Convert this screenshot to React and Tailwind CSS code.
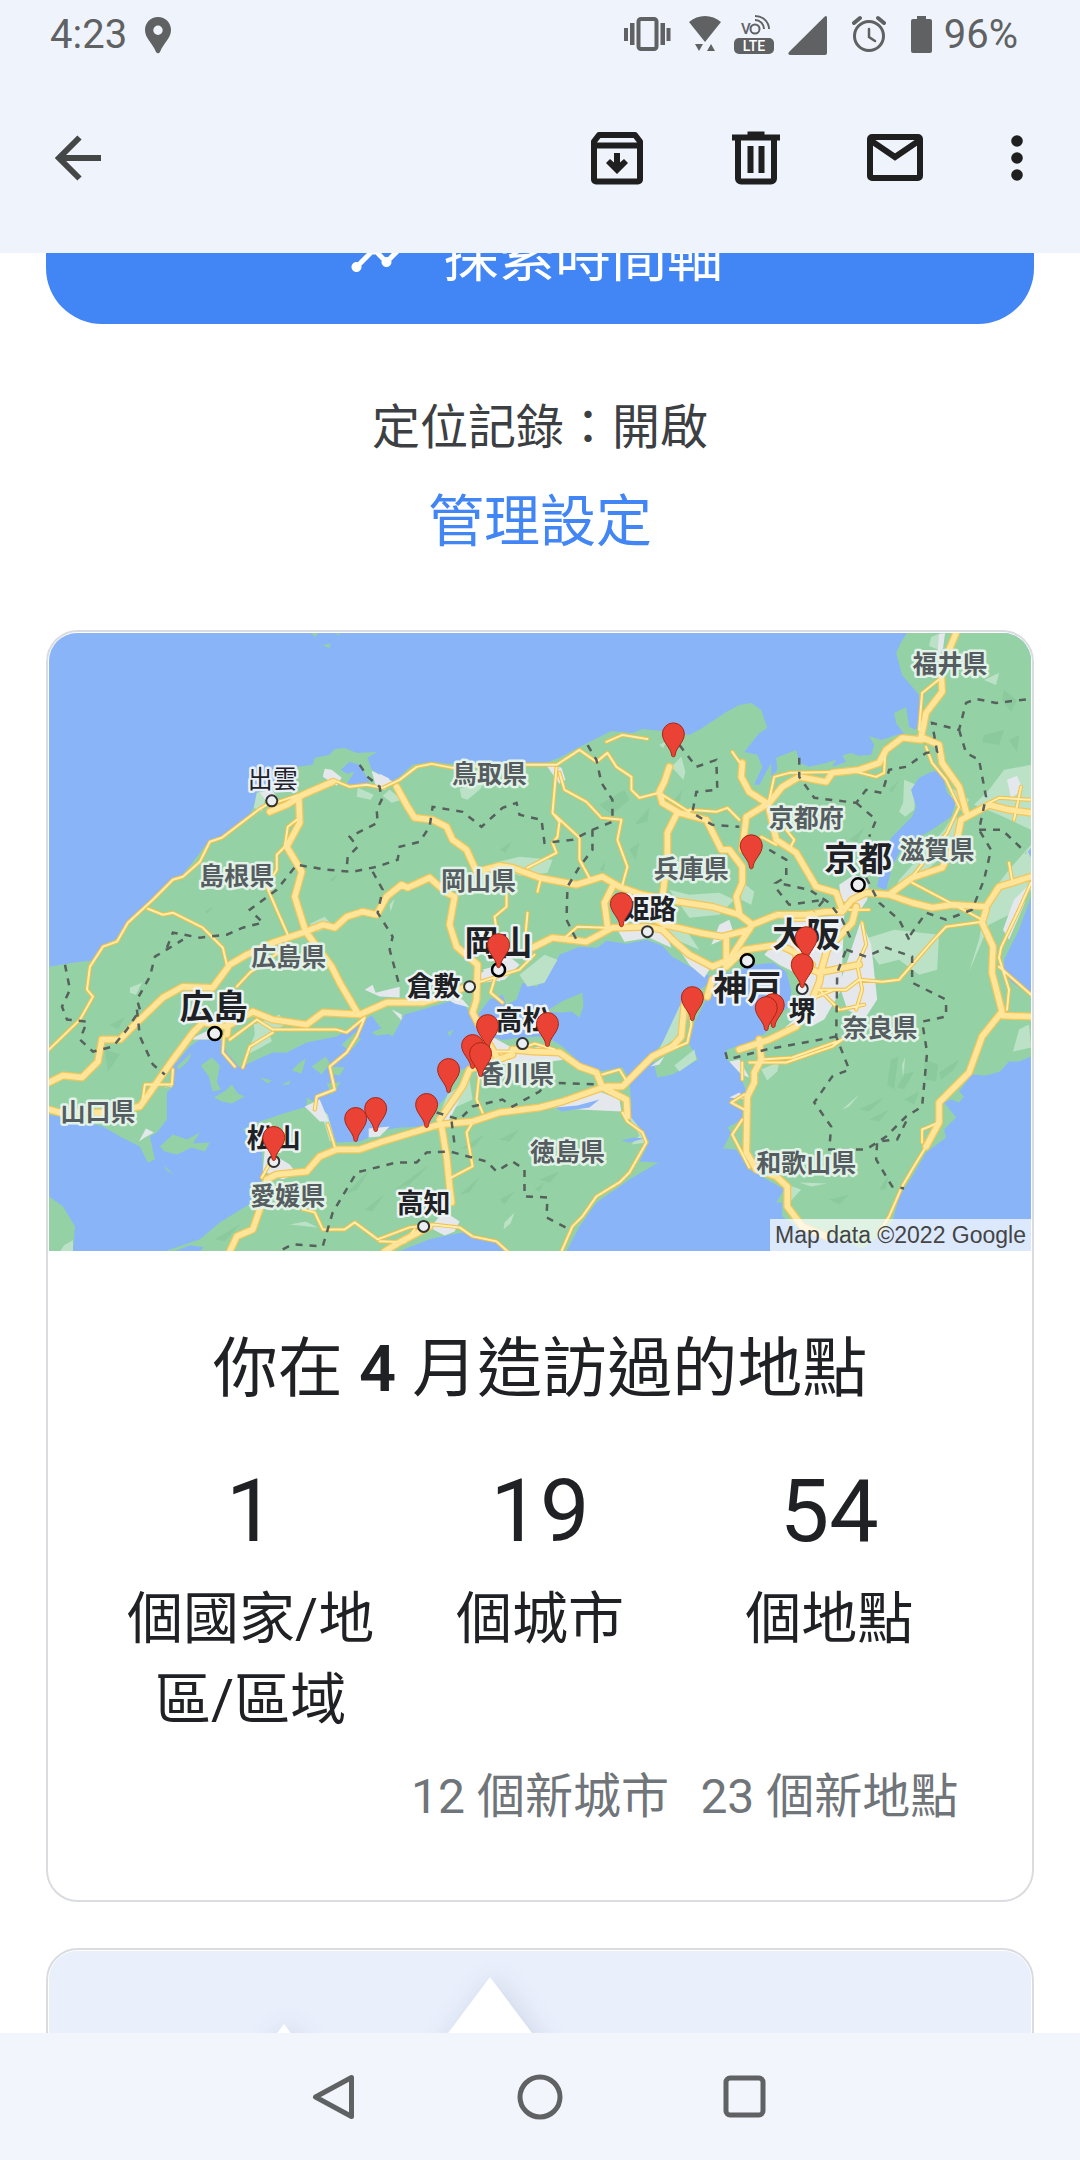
import React from 'react';
import { MdTimeline } from 'react-icons/md';

// Map shapes, all in the map's own coordinate space (see viewBox below)
const land = [
  // Honshu
  'M49 967 73 963 98 960 101 947 120 937 128 922 148 907 163 887 183 875 200 853 210 840 222 837 250 815 254 807 257 793 270 787 280 772 298 767 313 765 315 758 330 755 335 749 345 748 357 753 377 752 368 758 372 770 392 782 400 777 413 765 432 762 447 764 503 763 547 763 562 757 580 747 612 731 633 733 643 729 663 731 690 735 703 728 727 712 740 705 752 703 762 710 768 728 760 733 745 752 758 755 763 767 755 785 760 785 772 763 772 777 778 770 777 758 797 750 800 763 810 767 828 763 837 760 833 767 847 762 843 756 851 753 860 756 872 755 875 745 870 736 882 740 897 735 905 734 897 723 895 713 907 707 910 727 917 730 922 713 920 695 903 675 897 653 902 642 908 633 1032 633 1032 897 1020 930 1005 960 1005 973 1013 983 1032 995 1032 1057 1020 1062 1010 1062 1001 1072 987 1076 973 1075 960 1092 965 1097 960 1103 952 1100 945 1103 957 1118 945 1130 947 1138 927 1153 913 1177 900 1197 893 1223 880 1237 863 1250 843 1240 800 1229 783 1217 783 1203 777 1203 785 1190 773 1183 750 1170 737 1150 724 1149 732 1133 728 1128 743 1120 743 1110 730 1104 747 1092 740 1073 725 1057 728 1050 750 1043 767 1033 772 1020 790 1007 792 990 787 972 774 963 755 965 735 972 713 977 700 972 673 957 663 946 647 940 627 944 607 941 598 948 580 947 560 955 548 977 537 987 523 983 517 1000 507 1005 503 995 490 1000 477 1017 470 1013 463 1003 450 1002 423 1010 405 1015 393 1037 380 1027 372 1016 360 1023 337 1037 307 1043 287 1053 273 1053 257 1060 240 1068 227 1053 222 1040 200 1040 190 1047 173 1067 173 1087 167 1093 167 1120 157 1133 150 1137 155 1160 148 1163 140 1147 120 1137 103 1127 83 1122 49 1115Z',
  // Shikoku
  'M165 1252 200 1240 220 1223 257 1200 263 1173 262 1150 243 1130 257 1123 287 1113 307 1107 307 1098 323 1107 330 1127 337 1143 360 1142 388 1130 400 1128 430 1127 433 1113 450 1093 455 1073 470 1067 484 1048 494 1038 503 1040 523 1038 540 1037 550 1039 563 1047 580 1063 600 1072 623 1068 630 1080 632 1107 627 1117 643 1133 650 1142 640 1162 659 1163 630 1180 597 1203 580 1227 567 1252 507 1252 497 1244 463 1233 447 1236 430 1240 400 1252Z',
  // Awaji
  'M682 1007 690 997 708 985 707 1000 695 1023 690 1045 699 1060 673 1075 658 1078 653 1057 670 1033Z',
  // Kyushu
  'M49 1197 63 1207 75 1227 73 1252 49 1252Z',
  // islands
  'M547 1012 562 1002 583 993 584 1007 580 1018 572 1012 562 1013Z',
  'M160 1147 173 1135 187 1140 200 1133 193 1144 210 1143 205 1152 192 1148 177 1155 165 1152Z',
  'M201 1066 212 1058 220 1066 217 1083 221 1090 213 1092 209 1077Z',
  'M214 1098 226 1091 232 1085 238 1094 245 1097 232 1104 222 1102Z',
  'M177 1067 192 1053 188 1062 179 1070Z',
  'M292 1071 300 1063 306 1059 302 1074Z',
  'M260 1078 272 1081 268 1084Z M282 1085 291 1081 289 1085Z',
  'M312 1067 326 1057 330 1064 322 1075Z',
  'M328 1067 345 1068 340 1076 330 1074Z M327 1084 341 1083 332 1095Z',
  'M342 1045 355 1033 361 1040 350 1052Z M372 1033 398 1022 394 1034 377 1036Z',
  'M503 994 511 987 520 984 516 998Z',
  'M311 633 318 633 316 637Z M322 645 331 644 330 648Z M338 633 341 635 336 635Z',
  'M163 1230 160 1234Z M164 1166 174 1175 167 1171Z',
  'M448 1033 454 1030 450 1037Z',
];

const water = [
  'M930 773 942 770 948 793 957 802 952 817 933 830 903 847 893 867 887 890 878 887 882 867 892 838 913 817 917 807 912 790 920 778Z',
  'M341 770 350 762 360 765 370 783 358 786 347 784 355 772 347 774Z',
  'M498 1037 515 1035 510 1040 500 1040Z M556 1108 578 1106 600 1100 590 1108 562 1112Z',
  'M622 1141 634 1138 645 1139 630 1143Z',
  'M174 1252 190 1246 204 1248 200 1252Z M400 1252 412 1247 408 1252Z',
  'M1029 852 1032 848 1032 858Z',
];

// lowlands, lighter than the forest
const lowland = [
  'M905 780 917 785 915 810 906 817 900 812 904 803Z M932 637 942 633 940 650 930 646Z',
  'M460 789 468 786 487 780 480 790 468 800 462 798Z',
  'M383 796 390 790 402 800 392 803Z M357 797 358 788 374 795 371 800Z M254 808 257 793 268 790 262 812Z',
  'M495 863 520 857 553 860 548 873 520 876Z',
  'M672 767 682 757 686 772 684 780Z',
  'M130 988 142 983 136 995 130 993Z M310 924 325 917 332 925 318 932Z',
  'M254 1025 280 1015 285 1025 270 1035 272 1042 246 1056 255 1035Z',
  'M520 975 545 955 558 960 545 983 528 987Z',
  'M670 890 690 895 720 893 735 900 720 915 690 918Z M640 905 660 910 690 935 700 950 665 935Z',
  'M740 880 755 892 752 905 742 900Z M948 785 970 800 964 812 955 805Z',
  'M945 830 957 812 960 835 940 860 915 880 896 890 900 880Z',
  'M990 790 1005 770 1032 765 1032 830 1000 815 975 805Z',
  'M1032 845 1032 890 1010 915 990 925 970 972 980 940 987 900 1010 870Z',
  'M680 1007 690 1000 688 1020 675 1040 660 1050Z M675 1066 695 1050 697 1060 680 1072Z',
  'M863 940 895 930 940 935 938 970 920 975 900 960 880 965Z',
  'M780 1062 762 1070 768 1081 778 1072Z M790 1186 802 1190 790 1203Z',
  'M320 1108 328 1115 335 1140 330 1142Z M448 1095 470 1080 473 1100 440 1115Z',
  'M625 1110 640 1128 648 1143 632 1145 640 1136Z M64 1246 73 1241 73 1252 60 1252Z',
  'M660 745 667 741 664 748Z M390 905 395 899 391 912Z M1020 1030 1030 1025 1032 1048 1014 1052Z',
  'M505 1223 515 1213 511 1224 504 1230Z M843 1110 860 1095 850 1107Z M800 1183 812 1187 828 1184Z',
  'M985 680 1000 673 997 685Z M903 1065 906 1058 904 1078Z M290 1225 306 1222 318 1228Z',
];

const urban = [
  'M260 793 272 790 278 798 268 803Z M325 769 332 770 342 778 337 786 323 777Z M372 771 394 782 385 790 376 786Z',
  'M380 774 390 779 383 785Z M545 763 562 768 566 780 560 784Z M940 634 946 633 944 648 938 660Z',
  'M365 990 373 985 376 993 400 987 400 998 380 997Z M392 1010 402 1015 402 1021Z',
  'M445 998 463 1000 470 1008 455 1004Z M478 975 510 957 520 965 505 980 483 983Z M483 970 500 965 510 970 500 982Z',
  'M618 930 665 930 672 948 650 938 625 942Z M680 950 710 970 705 978 690 965Z',
  'M840 885 855 875 870 880 868 900 860 912 850 905 842 900Z M862 920 872 945 877 990 878 1000 865 1020 848 1010 840 985 852 950Z',
  'M795 920 845 915 842 990 825 1020 812 1027 800 1020 800 975 780 965 765 955Z',
  'M720 925 730 920 735 935 712 945Z M760 1050 795 1020 810 1008 800 1022 775 1035Z M730 1062 740 1060 750 1078 742 1075Z',
  'M139 1142 146 1129 154 1133 145 1138Z M164 1089 173 1083 172 1088 168 1087Z M190 1040 210 1030 222 1040 200 1040Z',
  'M305 1107 320 1100 329 1122 320 1122Z M263 1172 265 1150 290 1165 297 1174 283 1180 272 1175Z',
  'M369 1129 390 1127 380 1137 369 1138Z M492 1037 520 1052 548 1045 565 1060 545 1063 505 1065 488 1058Z',
  'M555 1108 600 1092 620 1100 622 1112 580 1110Z M440 1125 460 1100 455 1110 446 1127Z M430 1228 445 1212 460 1222 455 1232 445 1236Z',
  'M1008 780 1018 776 1024 790 1012 798Z M1015 900 1030 885 1025 905 1010 940 1004 930Z',
  'M730 1098 740 1093 746 1100Z M651 1067 665 1057 660 1065Z M378 1130 387 1129 383 1133Z',
];

// hill shading
const hills =
  'M600 805 625 790 630 800 612 815Z M635 825 650 808 648 822Z M675 800 683 790 680 802Z M985 735 1005 730 1000 745 983 742Z M1005 690 1018 700 1012 712 1003 700Z M1010 740 1020 735 1018 752Z M892 1060 899 1057 895 1090 888 1085Z M905 1075 915 1072 905 1090 898 1088Z M925 1060 939 1065 937 1082 926 1080Z M940 1073 960 1060 955 1070 942 1080Z M860 1110 885 1098 870 1112Z M905 1100 920 1092 915 1105Z M870 1120 890 1110 880 1122Z M460 1195 480 1178 470 1193Z M500 1200 515 1192 505 1205Z M500 1140 520 1130 510 1142Z M535 1190 545 1183 540 1192Z M345 1195 370 1170 358 1190Z M365 1210 385 1195 372 1212Z M395 1190 430 1165 410 1185Z M215 1240 240 1225 225 1242Z M540 1180 560 1172 550 1183Z M460 1150 485 1135 475 1147Z M105 1050 120 1055 108 1072Z M110 1025 125 1018 118 1030Z M330 880 338 875 333 882Z M205 912 214 906 208 914Z M500 850 512 842 506 853Z M630 850 640 843 636 860Z M600 870 606 862 604 872Z M850 840 865 828 858 842Z M890 790 900 780 893 793Z M880 1190 890 1175 886 1190Z M830 1200 850 1195 840 1205Z';

const highways =
  'M270 812 287 805 303 795 333 782 M299 797 300 823 287 847 302 872 295 897 306 932 332 967 340 983 357 1012 M430 878 408 888 402 885 387 897 377 915 363 912 347 917 335 928 323 925 303 933 273 943 247 955 230 965 213 988 183 987 163 998 137 1023 120 1040 102 1040 98 1062 82 1078 63 1076 49 1083 M430 878 447 893 455 897 450 925 457 947 478 965 477 1000 473 1013 487 1040 497 1057 M49 1110 60 1113 107 1113 140 1107 150 1093 173 1060 193 1033 203 1023 227 1027 253 1012 273 1020 307 1025 323 1013 360 1015 387 1003 423 1003 440 998 477 983 M227 1035 230 1015 M397 787 408 807 415 818 433 820 447 827 453 840 467 850 477 872 500 866 513 868 540 878 577 885 603 877 620 887 643 895 680 902 713 907 740 915 753 925 778 915 807 915 827 912 843 912 853 900 867 893 890 895 913 878 943 868 958 840 962 820 990 805 1010 810 1032 813 M670 767 665 782 660 792 663 803 680 813 707 820 722 850 730 850 743 867 743 883 737 897 740 913 M678 813 668 833 668 860 663 897 M533 948 553 938 587 942 613 928 647 927 663 930 673 940 690 955 713 967 730 960 753 925 M613 887 605 903 608 926 M647 915 665 925 700 933 723 937 750 930 M727 967 727 940 M957 633 950 650 942 670 943 692 927 713 922 737 940 745 943 763 960 787 967 812 M922 740 903 738 887 750 880 763 860 770 833 773 827 782 800 777 783 787 770 803 747 817 743 850 M743 763 742 777 750 792 767 803 M770 810 777 840 797 853 817 887 837 893 843 910 M890 895 913 903 933 908 953 905 987 907 1000 887 1032 877 M987 910 983 923 994 947 993 973 1003 1012 983 1037 970 1073 940 1103 940 1123 927 1147 M1003 1016 1032 1017 M857 907 853 923 840 937 828 950 823 967 820 983 810 1007 797 1027 770 1040 740 1050 M760 1040 762 1060 755 1073 755 1083 748 1097 747 1153 757 1170 777 1177 788 1187 788 1207 803 1227 827 1237 M797 955 797 963 820 973 860 965 M727 967 745 950 780 945 800 955 M713 980 708 997 M685 1005 682 1037 673 1047 653 1057 637 1073 623 1087 607 1087 M513 1050 533 1052 560 1053 580 1067 597 1073 603 1088 563 1102 540 1108 500 1113 473 1122 440 1125 380 1143 360 1150 337 1150 320 1157 307 1172 277 1175 267 1180 260 1210 253 1230 237 1237 230 1252 M440 1120 463 1087 470 1070 513 1055 M442 1127 447 1157 450 1187 452 1203 M430 1227 400 1243 385 1252 M603 1088 627 1100 628 1117';

const roads =
  'M270 803 260 809 222 838 210 842 200 862 183 877 173 880 153 900 128 923 117 942 103 947 90 967 87 990 93 997 80 1020 49 1050 M299 795 275 803 M333 780 350 787 367 785 383 788 400 780 417 767 432 764 453 768 503 765 557 765 580 750 597 762 608 753 617 767 632 777 632 790 640 798 660 793 M557 768 553 813 560 822 558 837 553 843 557 853 528 868 M560 773 565 790 587 802 602 818 622 820 618 840 628 867 623 885 M555 815 580 838 580 860 590 878 M297 820 288 827 285 847 277 855 277 870 267 887 280 917 288 935 M148 909 163 915 173 913 203 928 223 948 227 965 M224 1037 223 1053 235 1067 M230 1040 257 1020 273 1030 337 1030 347 1033 365 1018 357 1037 347 1053 330 1067 335 1090 317 1097 315 1110 M273 1033 250 1047 243 1068 M328 1125 335 1147 M237 987 250 973 273 957 290 945 M507 893 507 907 495 917 497 930 M528 913 526 935 M541 880 538 892 M497 973 491 993 503 1003 M478 983 520 970 535 955 M303 1210 315 1213 323 1230 345 1230 355 1223 378 1240 410 1228 433 1225 460 1228 473 1237 497 1242 508 1252 M380 1242 405 1243 415 1230 M473 1123 467 1133 473 1167 452 1178 M480 1073 477 1100 483 1113 M623 1113 628 1122 643 1133 647 1143 630 1173 620 1183 597 1197 583 1217 573 1227 562 1252 M488 1052 513 1052 535 1044 555 1050 M603 1075 620 1070 628 1083 M690 1000 692 1025 688 1043 660 1055 M943 677 923 693 920 730 M770 800 775 777 790 773 857 772 877 777 885 773 886 752 M733 752 740 762 M927 747 933 763 947 780 960 807 948 833 913 877 M990 803 1000 798 1032 800 M1022 787 1015 820 M913 883 983 920 M1013 880 1010 863 M983 922 947 927 933 942 900 980 883 982 860 980 847 990 820 990 M1032 883 1020 910 1002 948 1000 958 1010 990 1008 1010 M1000 967 1032 995 M690 810 717 812 728 808 740 820 M660 793 690 812 M607 742 623 735 648 739 M563 940 578 927 607 928 M762 837 777 845 M787 830 795 840 790 850 M743 1063 743 1080 M745 1095 732 1103 745 1110 M743 1120 733 1135 750 1168 M750 1063 787 1063 833 1047 850 1035 M762 1060 793 1058 843 1040 M940 1123 923 1130 923 1143 M927 1147 913 1170 903 1187 890 1217 880 1233 M863 923 867 945 858 965 863 990 857 1010 M842 1010 865 1005 M275 1155 262 1178 M173 1070 172 1085 145 1085 142 1105 M800 950 815 965 800 985 M810 1000 835 990 M820 990 840 1010 M850 910 870 910 M795 920 830 920';

const borders =
  'M360 765 368 777 380 787 382 800 377 810 378 823 350 837 358 847 348 857 347 868 M167 948 173 933 200 938 227 935 243 928 263 923 250 910 277 890 297 865 327 870 353 872 377 867 398 860 400 847 420 842 430 827 433 807 463 812 482 827 503 808 517 803 520 815 542 820 545 843 573 840 593 830 613 822 613 800 602 783 597 760 588 745 M593 830 593 850 580 867 568 887 567 920 577 940 M373 872 383 890 378 913 393 937 390 950 400 987 M680 745 697 767 717 760 718 790 697 792 693 813 713 825 740 827 M800 758 800 777 815 798 857 803 867 790 883 793 890 770 907 767 927 753 938 752 933 723 960 730 967 703 977 699 997 703 1032 699 M960 730 967 753 980 760 987 797 980 830 992 850 985 880 973 910 947 920 927 913 910 937 M980 830 1003 830 1027 853 M857 803 877 820 870 837 M867 878 880 903 900 920 910 940 M770 850 787 860 787 877 777 883 810 890 830 903 843 920 852 940 M778 890 790 905 825 900 815 912 M847 950 867 957 887 948 913 957 913 983 947 1000 947 1017 923 1022 928 1053 923 1107 907 1117 887 1137 867 1150 830 1150 832 1127 815 1103 833 1077 850 1070 837 1037 838 973 847 950 M837 1037 767 1050 728 1060 726 1052 M907 1122 898 1140 878 1142 877 1160 893 1187 905 1189 M65 965 70 990 62 1007 67 1020 87 1022 80 1040 93 1052 113 1047 127 1030 140 1010 137 1000 150 977 155 957 183 940 M137 1010 140 1037 153 1065 165 1075 M283 1250 293 1245 323 1247 333 1213 357 1173 397 1163 417 1163 427 1153 450 1152 487 1162 497 1172 513 1162 525 1170 525 1197 548 1198 547 1218 570 1230 M437 1113 460 1120 473 1107 503 1100 513 1107 540 1092 547 1083 600 1085 M452 1122 455 1145';

const prefectures = [
  ['福井県', 951, 664], ['鳥取県', 490, 774], ['京都府', 807, 818], ['滋賀県', 938, 850],
  ['兵庫県', 692, 869], ['島根県', 237, 876], ['岡山県', 479, 881], ['広島県', 289, 957],
  ['奈良県', 881, 1028], ['香川県', 517, 1074], ['山口県', 98, 1113], ['徳島県', 568, 1153],
  ['和歌山県', 807, 1164], ['愛媛県', 288, 1197],
];

const cities = [
  { name: '姫路', x: 650, y: 909, dot: [648, 932] },
  { name: '倉敷', x: 434, y: 986, dot: [470, 987] },
  { name: '高松', x: 523, y: 1020, dot: [523, 1044] },
  { name: '堺', x: 803, y: 1011, dot: [803, 989] },
  { name: '松山', x: 274, y: 1139, dot: [274, 1162] },
  { name: '高知', x: 424, y: 1204, dot: [424, 1227] },
];

const bigCities = [
  { name: '京都', x: 859, y: 858, dot: [859, 885] },
  { name: '大阪', x: 807, y: 934, dot: null },
  { name: '岡山', x: 499, y: 942, dot: [499, 970] },
  { name: '神戸', x: 748, y: 987, dot: [748, 961] },
  { name: '広島', x: 214, y: 1006, dot: [215, 1034] },
];

// tip of every pin, drawn in this order
const pins = [
  [674, 757], [752, 869], [622, 927], [807, 961], [499, 968], [803, 988],
  [774, 1028], [767, 1031], [693, 1021], [548, 1047], [488, 1049], [473, 1069],
  [481, 1077], [449, 1093], [427, 1128], [376, 1132], [356, 1142], [274, 1161],
];

const stats = [
  { value: '1', label: '個國家/地區/區域', fresh: '' },
  { value: '19', label: '個城市', fresh: '12 個新城市' },
  { value: '54', label: '個地點', fresh: '23 個新地點' },
];

const halo = { paintOrder: 'stroke' };

const VisitedMap = () => (
  <svg viewBox="49 633 983 619" className="block w-full" role="img" aria-label="地圖">
    <rect x="49" y="633" width="983" height="619" fill="#8ab4f8" />
    <path d={land.join(' ')} fill="#94d2a5" />
    <path d={lowland.join(' ')} fill="#bbe2c6" />
    <path d={urban.join(' ')} fill="#e4e7ec" />
    <path d={hills} fill="#84c497" opacity="0.6" />
    <path d={water.join(' ')} fill="#8ab4f8" />
    <g fill="none" strokeLinejoin="round" strokeLinecap="round">
      <path d={roads} stroke="#f3bf45" strokeWidth="4" />
      <path d={highways} stroke="#f4c659" strokeWidth="8" />
      <path d={roads} stroke="#ffeeb0" strokeWidth="2" />
      <path d={highways} stroke="#ffe599" strokeWidth="5.500" />
    </g>
    <path d={borders} fill="none" stroke="#56605c" strokeWidth="2.500" strokeDasharray="7 7" />

    <g
      className="font-['Noto_Sans_CJK_JP',sans-serif]"
      textAnchor="middle"
      strokeLinejoin="round"
    >
      <g fontSize="25" fontWeight="700" fill="#565d61" stroke="#e3f2e8" strokeWidth="5" style={halo}>
        {prefectures.map(([name, x, y]) => (
          <text key={name} x={x} y={y + 9}>{name}</text>
        ))}
      </g>
      <text x="273" y="788" fontSize="25" fill="#202124" stroke="#e8eff8" strokeWidth="5" style={halo}>出雲</text>
      <circle cx="272" cy="801" r="5.500" fill="#eceff1" stroke="#333" strokeWidth="2" />
      {cities.map(({ name, x, y, dot }) => (
        <g key={name}>
          <circle cx={dot[0]} cy={dot[1]} r="5.500" fill="#eceff1" stroke="#333" strokeWidth="2" />
          <text x={x} y={y + 10} fontSize="27" fontWeight="700" fill="#202124" stroke="#edf3f4" strokeWidth="5" style={halo}>
            {name}
          </text>
        </g>
      ))}
      {bigCities.map(({ name, x, y, dot }) => (
        <g key={name}>
          {dot && <circle cx={dot[0]} cy={dot[1]} r="6.500" fill="#eceff1" stroke="#000" strokeWidth="2.500" />}
          <text x={x} y={y + 13} fontSize="34" fontWeight="700" fill="#202124" stroke="#edf3f4" strokeWidth="5" style={halo}>
            {name}
          </text>
        </g>
      ))}
    </g>

    {pins.map(([x, y]) => (
      <path
        key={`${x}-${y}`}
        transform={`translate(${x} ${y})`}
        d="M0 0c-1.500 0-1.800-1-2-3-.7-6-9-12-9-20a11 11 0 0 1 22 0c0 8-8.300 14-9 20-.2 2-.5 3-2 3Z"
        fill="#ea4335"
        stroke="#a52714"
      />
    ))}
  </svg>
);

const StatusBar = () => (
  <div className="flex items-center justify-between pt-[15px] pl-[50px] pr-[62px] h-[55px] text-[40px] leading-10 text-[#5f6163]">
    <div className="flex items-center gap-4">
      <span>4:23</span>
      <svg width="30" height="40" viewBox="0 0 30 40" fill="currentColor" aria-hidden="true">
        <path
          fillRule="evenodd"
          d="M15 2C7.500 2 2 7.800 2 15c0 8.500 7.500 13 11 22 1 1.600 3 1.600 4 0 3.500-9 11-13.500 11-22C28 7.800 22.500 2 15 2Zm0 8.500a4.700 4.700 0 1 1 0 9.400 4.700 4.700 0 0 1 0-9.400Z"
        />
      </svg>
    </div>
    <div className="flex items-center gap-3">
      {/* vibrate */}
      <svg width="55" height="40" viewBox="0 0 55 40" fill="currentColor" aria-hidden="true">
        <rect x="16.500" y="4" width="18" height="30" rx="2.500" fill="none" stroke="currentColor" strokeWidth="4" />
        <path d="M2 13h4v13H2zM8 8h4.500v22H8zM38.500 8H43v22h-4.500zM44.500 13h4v13h-4z" />
      </svg>
      {/* wifi */}
      <svg width="33" height="40" viewBox="0 0 33 40" fill="currentColor" aria-hidden="true">
        <path d="M0 7c9-8 23-8 32 0L16 27ZM6 29h8l-4 7ZM18 36h8l-4-7Z" />
      </svg>
      {/* VoLTE */}
      <svg width="42" height="40" viewBox="0 0 42 40" aria-hidden="true">
        <rect x="0" y="23" width="40" height="16" rx="5" fill="currentColor" />
        <text x="20" y="36" fontSize="14" fontWeight="500" textAnchor="middle" fill="#fff">LTE</text>
        <text x="7" y="19" fontSize="15" fontWeight="500" fill="currentColor">V</text>
        <g fill="none" stroke="currentColor" strokeWidth="2">
          <circle cx="21" cy="14" r="4.500" />
          <path d="M21 5c5 0 9 4 9 9M21 1c8 0 14 6 14 13" />
        </g>
      </svg>
      {/* signal */}
      <svg width="52" height="40" viewBox="0 0 52 40" fill="currentColor" aria-hidden="true">
        <path d="M36 2.200Q39 -.5 39 3v35q0 2-2 2H3q-4 0-2-3Z" />
      </svg>
      {/* alarm */}
      <svg width="47" height="40" viewBox="0 0 47 40" fill="none" stroke="currentColor" strokeWidth="3" strokeLinecap="round" aria-hidden="true">
        <circle cx="17" cy="21" r="14.500" />
        <path d="M17 14v8l6 4" strokeWidth="2.500" />
        <path d="m2 8 6-5M26 3l6 5" strokeWidth="4" />
      </svg>
      {/* battery */}
      <svg width="21" height="40" viewBox="0 0 21 40" fill="currentColor" aria-hidden="true">
        <path d="M6 1h9v3h4q2 0 2 2v30q0 2-2 2H2q-2 0-2-2V6q0-2 2-2h4Z" />
      </svg>
      <span>96%</span>
    </div>
  </div>
);

const Toolbar = () => (
  <div className="flex items-center justify-between h-[198px] pt-2 pl-[50px] pr-[52px] text-[#1f1f1f]">
    <button type="button" aria-label="返回" className="text-[#444746]">
      <svg width="56" height="56" viewBox="0 0 56 56" fill="none" stroke="currentColor" strokeWidth="6">
        <path d="M51 28H10M29.500 7.500 9 28l20.500 20.500" />
      </svg>
    </button>
    <div className="flex items-center gap-[83px]">
      <button type="button" aria-label="封存">
        <svg width="56" height="56" viewBox="0 0 56 56" fill="none" stroke="currentColor" strokeWidth="6" strokeLinejoin="round">
          <path d="M5 11.500 10 5h36l5 6.500V49.500a2 2 0 0 1-2 2H7a2 2 0 0 1-2-2ZM4 15.500h48" />
          <path d="M28 23v12" strokeLinejoin="miter" />
          <path d="m17 33 4-4 7 6 7-6 4 4-11 11Z" fill="currentColor" stroke="none" />
        </svg>
      </button>
      <button type="button" aria-label="刪除">
        <svg width="56" height="56" viewBox="0 0 56 56" fill="none" stroke="currentColor" strokeWidth="6">
          <path d="M10 8v40.500a3 3 0 0 0 3 3h30a3 3 0 0 0 3-3V8M4 7.500h48M19.500 4.500h17M22.500 16v27M33.500 16v27" />
        </svg>
      </button>
      <button type="button" aria-label="標示為未讀">
        <svg width="56" height="56" viewBox="0 0 56 56" fill="none" stroke="currentColor" strokeWidth="6">
          <rect x="3" y="7" width="50" height="41" rx="2" />
          <path d="m3 10 25 17 25-17" />
        </svg>
      </button>
      <button type="button" aria-label="更多選項">
        <svg width="22" height="56" viewBox="0 0 22 56" fill="currentColor">
          <circle cx="11" cy="11" r="5.800" />
          <circle cx="11" cy="28" r="5.800" />
          <circle cx="11" cy="45" r="5.800" />
        </svg>
      </button>
    </div>
  </div>
);

const NavBar = () => (
  <nav className="flex shrink-0 items-center justify-center gap-[157px] h-[127px] bg-[#f2f5fc] text-[#5f6163]">
    <button type="button" aria-label="上一頁">
      <svg width="48" height="48" viewBox="0 0 48 48" fill="none" stroke="currentColor" strokeWidth="5" strokeLinejoin="round">
        <path d="M40.500 4.500v39L4.500 24Z" />
      </svg>
    </button>
    <button type="button" aria-label="主畫面">
      <svg width="48" height="48" viewBox="0 0 48 48" fill="none" stroke="currentColor" strokeWidth="5">
        <circle cx="24" cy="24" r="20" />
      </svg>
    </button>
    <button type="button" aria-label="最近使用">
      <svg width="48" height="48" viewBox="0 0 48 48" fill="none" stroke="currentColor" strokeWidth="5">
        <rect x="5" y="5" width="37" height="37" rx="4" />
      </svg>
    </button>
  </nav>
);

const App = () => {
  return (
    <div className="flex h-screen flex-col overflow-hidden bg-white font-[Roboto,'Noto_Sans_CJK_TC',sans-serif] text-[#202124]">
      <header className="relative z-10 shrink-0 bg-[#eff4fc]">
        <StatusBar />
        <Toolbar />
      </header>

      <main className="flex min-h-0 flex-1 flex-col overflow-hidden px-[46px]">
        {/* scrolled part way under the header */}
        <button
          type="button"
          className="-mt-[63px] flex h-[134px] shrink-0 items-center justify-center gap-[34px] rounded-[56px] bg-[#4285f4] pr-2 text-[56px] text-white"
        >
          <MdTimeline size={60} />
          探索時間軸
        </button>

        <p className="mt-[68px] text-center text-[48px] leading-[72px] text-[#3c4043]">定位記錄：開啟</p>
        <a href="#settings" className="mt-4 text-center text-[56px] leading-[84px] text-[#4285f4]">管理設定</a>

        <section className="mt-[66px] shrink-0 rounded-[32px] border-2 border-[#dadce0] pb-[71px]">
          <div className="relative mx-px mt-px overflow-hidden rounded-t-[28px]">
            <VisitedMap />
            <p className="absolute right-0 bottom-0 bg-white/70 px-[5px] font-['Liberation_Sans',sans-serif] text-[23px] leading-8 text-[#444]">
              Map data ©2022 Google
            </p>
          </div>
          <h2 className="mt-[76px] text-center text-[65px] leading-[84px]">
            你在 <b className="font-semibold">4</b> 月造訪過的地點
          </h2>
          <div className="mt-[50px] grid grid-cols-3 px-[58px] text-center">
            {stats.map((item) => (
              <div key={item.value}>
                <p className="text-[88px] leading-[100px]">{item.value}</p>
                <p className="mt-[18px] text-[56px] leading-[81px]">{item.label}</p>
              </div>
            ))}
          </div>
          <div className="mt-6 grid grid-cols-3 px-[58px] text-center text-[48px] leading-[64px] text-[#70757a]">
            {stats.map((item) => (
              <p key={item.value}>{item.fresh}</p>
            ))}
          </div>
        </section>

        <section className="mt-[46px] shrink-0 rounded-[32px] border-2 border-[#dadce0] p-px">
          <div className="overflow-hidden rounded-[28px] bg-[#e9effb]">
            <svg viewBox="0 0 982 300" className="block w-full drop-shadow-[4px_0_12px_rgba(60,80,130,0.14)]" aria-hidden="true">
              <path d="M441 26 646 300H236ZM235 73 405 300H65Z" fill="#fff" />
            </svg>
          </div>
        </section>
      </main>

      <NavBar />
    </div>
  );
};

export default App;
